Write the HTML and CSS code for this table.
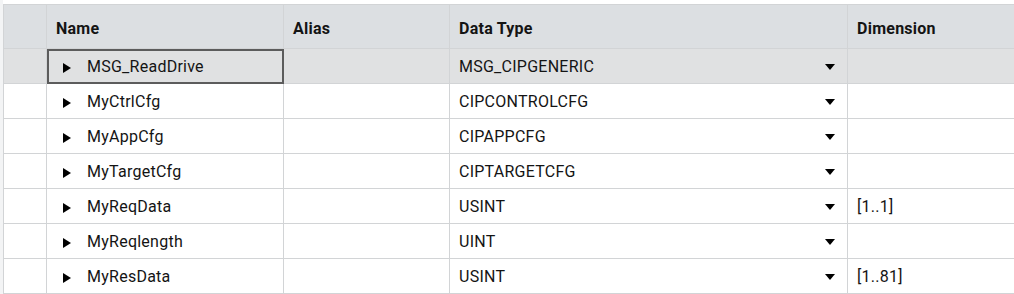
FILE: index.html
```html
<!DOCTYPE html>
<html lang="en">
<head>
    <meta charset="UTF-8">
    <title>Tag Members</title>
    <link rel="stylesheet" href="styles.css">
</head>
<body>
    <div class="grid-wrap">
        <table class="tag-grid">
            <colgroup>
                <col class="col-stub">
                <col class="col-name">
                <col class="col-alias">
                <col class="col-type">
                <col class="col-dim">
            </colgroup>
            <thead>
                <tr>
                    <th></th>
                    <th>Name</th>
                    <th>Alias</th>
                    <th>Data Type</th>
                    <th>Dimension</th>
                </tr>
            </thead>
            <tbody>
                <tr class="selected">
                    <td></td>
                    <td class="name-cell focused"><span class="expander"><svg width="8" height="10" viewBox="0 0 8 10"><polygon points="0,0 8,5 0,10"/></svg></span>MSG_ReadDrive</td>
                    <td></td>
                    <td class="type-cell"><span>MSG_CIPGENERIC</span><svg class="drop" width="10" height="6" viewBox="0 0 10 6"><polygon points="0,0 10,0 5,6"/></svg></td>
                    <td></td>
                </tr>
                <tr>
                    <td></td>
                    <td class="name-cell"><span class="expander"><svg width="8" height="10" viewBox="0 0 8 10"><polygon points="0,0 8,5 0,10"/></svg></span>MyCtrlCfg</td>
                    <td></td>
                    <td class="type-cell"><span>CIPCONTROLCFG</span><svg class="drop" width="10" height="6" viewBox="0 0 10 6"><polygon points="0,0 10,0 5,6"/></svg></td>
                    <td></td>
                </tr>
                <tr>
                    <td></td>
                    <td class="name-cell"><span class="expander"><svg width="8" height="10" viewBox="0 0 8 10"><polygon points="0,0 8,5 0,10"/></svg></span>MyAppCfg</td>
                    <td></td>
                    <td class="type-cell"><span>CIPAPPCFG</span><svg class="drop" width="10" height="6" viewBox="0 0 10 6"><polygon points="0,0 10,0 5,6"/></svg></td>
                    <td></td>
                </tr>
                <tr>
                    <td></td>
                    <td class="name-cell"><span class="expander"><svg width="8" height="10" viewBox="0 0 8 10"><polygon points="0,0 8,5 0,10"/></svg></span>MyTargetCfg</td>
                    <td></td>
                    <td class="type-cell"><span>CIPTARGETCFG</span><svg class="drop" width="10" height="6" viewBox="0 0 10 6"><polygon points="0,0 10,0 5,6"/></svg></td>
                    <td></td>
                </tr>
                <tr>
                    <td></td>
                    <td class="name-cell"><span class="expander"><svg width="8" height="10" viewBox="0 0 8 10"><polygon points="0,0 8,5 0,10"/></svg></span>MyReqData</td>
                    <td></td>
                    <td class="type-cell"><span>USINT</span><svg class="drop" width="10" height="6" viewBox="0 0 10 6"><polygon points="0,0 10,0 5,6"/></svg></td>
                    <td>[1..1]</td>
                </tr>
                <tr>
                    <td></td>
                    <td class="name-cell"><span class="expander"><svg width="8" height="10" viewBox="0 0 8 10"><polygon points="0,0 8,5 0,10"/></svg></span>MyReqlength</td>
                    <td></td>
                    <td class="type-cell"><span>UINT</span><svg class="drop" width="10" height="6" viewBox="0 0 10 6"><polygon points="0,0 10,0 5,6"/></svg></td>
                    <td></td>
                </tr>
                <tr>
                    <td></td>
                    <td class="name-cell"><span class="expander"><svg width="8" height="10" viewBox="0 0 8 10"><polygon points="0,0 8,5 0,10"/></svg></span>MyResData</td>
                    <td></td>
                    <td class="type-cell"><span>USINT</span><svg class="drop" width="10" height="6" viewBox="0 0 10 6"><polygon points="0,0 10,0 5,6"/></svg></td>
                    <td>[1..81]</td>
                </tr>
                <tr class="partial">
                    <td></td>
                    <td></td>
                    <td></td>
                    <td></td>
                    <td></td>
                </tr>
            </tbody>
        </table>
    </div>
</body>
</html>
```

FILE: styles.css
```css
:root {
    --header-bg: #dcdfe2;
    --selected-bg: #e0e1e2;
    --grid-line: #d2d4d6;
    --text: #141414;
    --focus: #5c5c5c;
}

body {
    margin: 0;
    background: #ffffff;
    font-family: Roboto, "Liberation Sans", sans-serif;
    font-size: 16px;
    letter-spacing: 0.25px;
    color: var(--text);
    overflow: hidden;
}

.grid-wrap {
    padding: 4px 0 0 3px;
    background: linear-gradient(to right, #f3f4f5 3px, #ffffff 3px);
}

.tag-grid {
    border-collapse: collapse;
    table-layout: fixed;
    width: 1012px;
}

.col-stub { width: 43px; }
.col-name { width: 237px; }
.col-alias { width: 166px; }
.col-type { width: 398px; }
.col-dim { width: 168px; }

.tag-grid th,
.tag-grid td {
    border: 1px solid var(--grid-line);
    padding: 0 9px;
    text-align: left;
    white-space: nowrap;
}

.tag-grid th {
    background: var(--header-bg);
    font-weight: bold;
    height: 44px;
    padding-top: 3px;
    box-sizing: border-box;
}

.tag-grid td {
    height: 35px;
    box-sizing: border-box;
    padding-top: 1px;
}

.tag-grid tr.selected td {
    background: var(--selected-bg);
}

.tag-grid td.focused {
    outline: 2px solid var(--focus);
    outline-offset: -2px;
}

.name-cell {
    padding-left: 16px !important;
}

.expander {
    display: inline-block;
    width: 24px;
    vertical-align: -1px;
}

.type-cell {
    position: relative;
}

.type-cell .drop {
    position: absolute;
    right: 12px;
    top: 15px;
}

.tag-grid tr.partial td {
    height: 10px;
}
```
